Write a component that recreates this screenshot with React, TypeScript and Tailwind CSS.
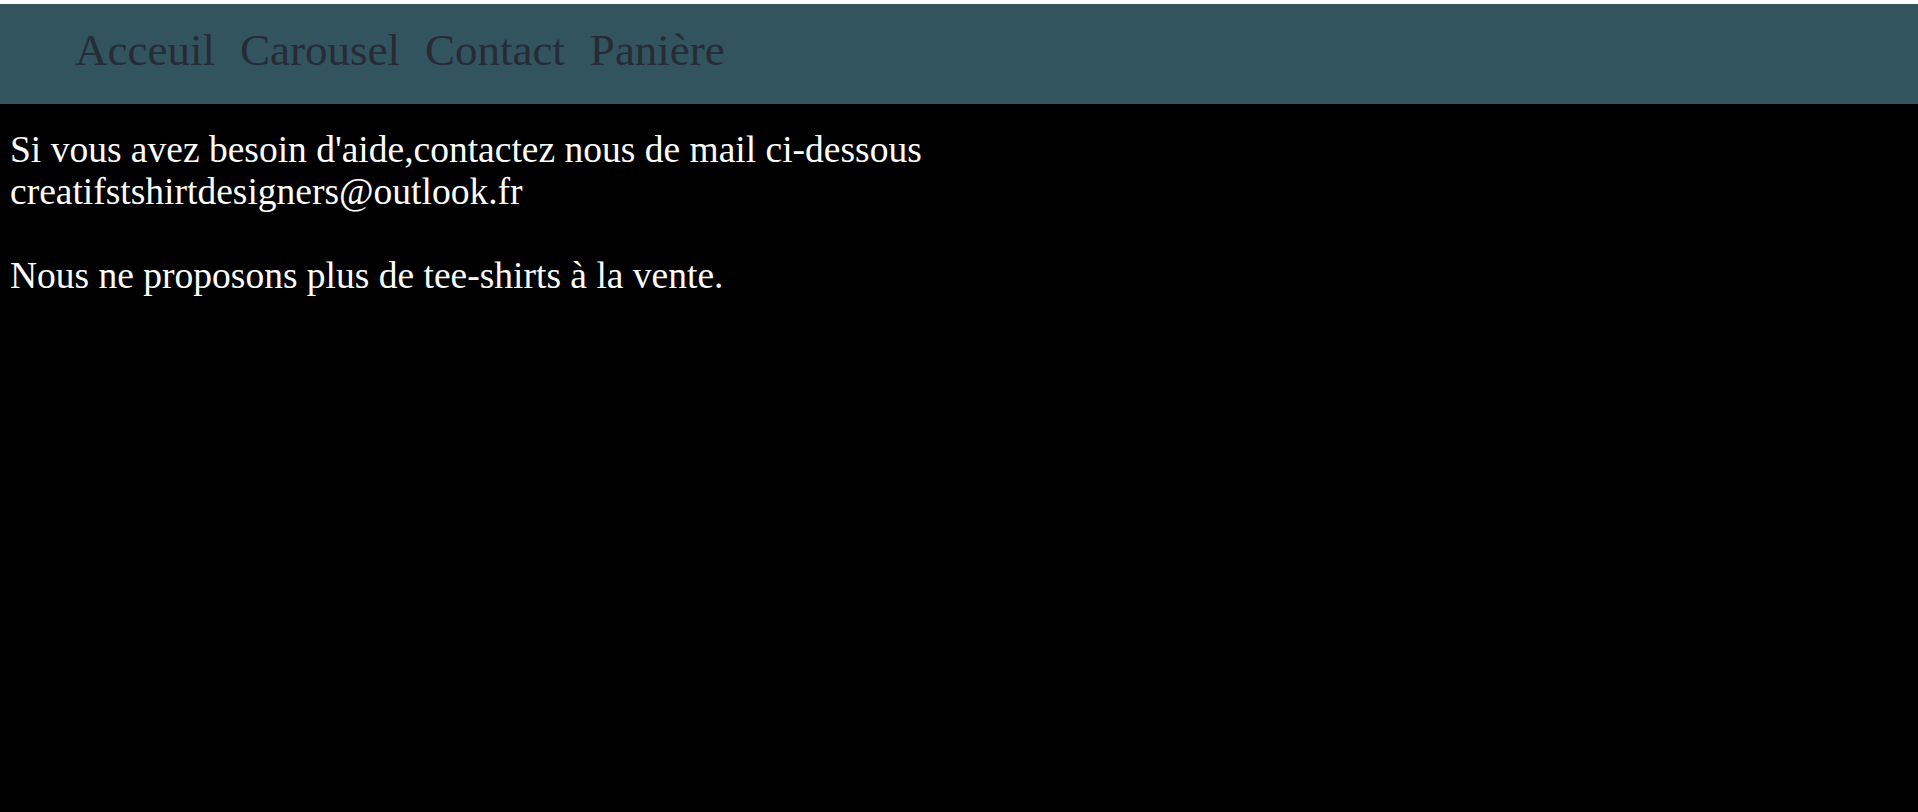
export default function App() {
  const links = ["Acceuil", "Carousel", "Contact", "Panière"];

  return (
    <div className="min-h-[812px] bg-black pt-[4px] font-['Liberation_Serif','Times_New_Roman',serif]">
      <div className="fixed inset-x-0 top-0 h-[4px] bg-white" />
      <nav className="h-[100px] bg-[#32545e] pl-[75px] pt-[20px]">
        <ul className="flex gap-[25px] text-[45px] leading-[normal] text-[#262b35]">
          {links.map((l) => (
            <li key={l}>
              <a href="#">{l}</a>
            </li>
          ))}
        </ul>
      </nav>

      <main className="pl-[10px] pt-[25px] text-[37.5px] leading-[42px] text-white">
        <p>
          Si vous avez besoin d'aide,contactez nous de mail ci-dessous
          <br />
          creatifstshirtdesigners@outlook.fr
          <br />
          <br />
          Nous ne proposons plus de tee-shirts à la vente.
        </p>
      </main>
    </div>
  );
}
